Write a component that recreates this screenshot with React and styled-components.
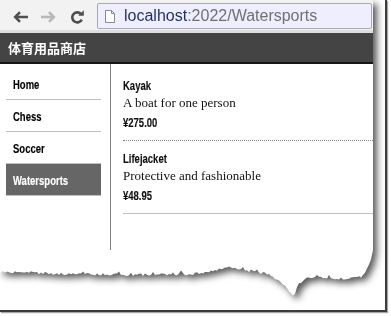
import React from 'react';
import styled, { createGlobalStyle } from 'styled-components';

const GlobalStyle = createGlobalStyle`
  html, body { margin: 0; padding: 0; background: #fff; }
  body { width: 391px; height: 316px; overflow: hidden; }
  * { box-sizing: border-box; }
`;

const KEYS = [
  [0, 272], [20, 272], [60, 274], [130, 275], [190, 274], [215, 271], [222, 268],
  [232, 267], [245, 271], [268, 274], [278, 280], [286, 286], [291, 293], [294, 297],
  [297, 286], [302, 282], [308, 277], [330, 278], [350, 279], [362, 276], [368, 268],
  [371, 260], [373, 252],
];

function baseY(x) {
  for (let i = 0; i < KEYS.length - 1; i++) {
    const [x0, y0] = KEYS[i];
    const [x1, y1] = KEYS[i + 1];
    if (x >= x0 && x <= x1) return y0 + ((y1 - y0) * (x - x0)) / (x1 - x0 || 1);
  }
  return KEYS[KEYS.length - 1][1];
}

function buildClip() {
  let seed = 11;
  const rnd = () => {
    seed = (seed * 9301 + 49297) % 233280;
    return seed / 233280;
  };
  const pts = [];
  for (let x = 373; x > 0; x -= 2) {
    let j = (rnd() - 0.5) * 2.6;
    if (rnd() > 0.88) j -= 2.5;
    pts.push(`${x}px ${(baseY(x) + j).toFixed(1)}px`);
  }
  pts.push(`0px ${baseY(0)}px`);
  return `0 0, 373px 0, ${pts.join(', ')}`;
}

const CLIP = buildClip();

const Frame = styled.div`
  width: 387px;
  height: 312px;
  border-right: 2px solid #3c3c3c;
  border-bottom: 2px solid #3c3c3c;
  box-shadow: 1px 1px 1px rgba(0, 0, 0, 0.35);
  background: #fff;
  overflow: hidden;
`;

const ShadowWrap = styled.div`
  width: 373px;
  filter: drop-shadow(4px 4px 3.5px rgba(0, 0, 0, 0.65));
`;

const Shot = styled.div`
  width: 373px;
  height: 302px;
  background: #fff;
  clip-path: polygon(${CLIP});
  display: flex;
  flex-direction: column;
`;

const Toolbar = styled.div`
  display: flex;
  align-items: center;
  gap: 13px;
  height: 33px;
  padding: 3px 1px 0 12px;
  background: #f2f2f2;
  border-bottom: 3px solid #dedede;
`;

const IconSlot = styled.span`
  display: flex;
  align-items: center;
  justify-content: center;
  width: ${(p) => p.$w}px;
  height: 27px;
`;

const Address = styled.div`
  flex: 1;
  height: 26px;
  align-self: flex-start;
  display: flex;
  align-items: center;
  gap: 9px;
  padding-left: 7px;
  background: #eeeeff;
  border: 1px solid #a9a9b2;
  border-radius: 2px;
  font-family: "Liberation Sans", Arial, sans-serif;
  font-size: 16px;
  white-space: nowrap;
  overflow: hidden;
`;

const Host = styled.span`
  color: #1f2f5c;
`;

const Path = styled.span`
  color: #707070;
`;

const Header = styled.div`
  height: 31px;
  background: #444;
  border-bottom: 2px solid #151515;
  padding: 1px 0 0 8px;
  color: #fff;
  font-family: "Noto Sans CJK SC", "Noto Sans", sans-serif;
  font-weight: 700;
  font-size: 13px;
  line-height: 28px;
`;

const Main = styled.div`
  display: flex;
`;

const Sidebar = styled.nav`
  width: 110px;
  padding: 4px 9px 0 6px;
  display: flex;
  flex-direction: column;
`;

/* Arial Narrow look: Arial bold compressed horizontally */
const Narrow = styled.span`
  display: inline-block;
  font-family: "Liberation Sans", Arial, sans-serif;
  font-weight: 700;
  font-size: 12.5px;
  white-space: nowrap;
  transform: scaleX(0.76);
  transform-origin: left center;
  -webkit-text-stroke: 0.15px currentColor;
`;

const NavLink = styled.a`
  display: block;
  height: 32px;
  line-height: 31px;
  padding: 0 7px;
  border-bottom: 1px solid #c0c0c0;
  text-decoration: none;
  color: ${(p) => (p.$active ? '#fff' : '#000')};
  background: ${(p) => (p.$active ? '#666' : 'transparent')};
`;

const Content = styled.div`
  flex: 1;
  height: 186px;
  border-left: 1px solid #808080;
  padding: 12px 0 0 12px;
`;

const Item = styled.div`
  border-top: ${(p) => (p.$first ? 'none' : '1px dotted #808080')};
  padding-top: ${(p) => (p.$first ? 0 : 8)}px;
  margin-bottom: 7px;
  color: #111;
`;

const Line = styled.div`
  line-height: ${(p) => p.$lh}px;
  height: ${(p) => p.$lh}px;
`;

const Desc = styled(Line)`
  font-family: "Liberation Serif", "Times New Roman", serif;
  font-size: 13px;
`;

const Pager = styled.div`
  margin-top: 2px;
  border-top: 1px solid #c0c0c0;
`;

const BackIcon = ({ color }) => (
  <svg width="16" height="12" viewBox="0 0 16 12">
    <path d="M16 6H3.2M8 1.2L3.2 6L8 10.8" stroke={color} strokeWidth="2.6" fill="none" />
  </svg>
);

const ForwardIcon = ({ color }) => (
  <svg width="16" height="12" viewBox="0 0 16 12">
    <path d="M0 6H12.8M8 1.2L12.8 6L8 10.8" stroke={color} strokeWidth="2.6" fill="none" />
  </svg>
);

const ReloadIcon = () => (
  <svg width="14" height="14" viewBox="0 0 14 14">
    <path d="M11.3 4.4A5 5 0 1 0 11.8 9.6" stroke="#4e4e4e" strokeWidth="2.6" fill="none" />
    <polygon points="8.2,5.8 13.8,5.8 13.8,0.2" fill="#4e4e4e" />
  </svg>
);

const PageIcon = () => (
  <svg width="10" height="13" viewBox="0 0 10 13">
    <path d="M0.5 0.5H6.5L9.5 3.5V12.5H0.5Z" stroke="#8a8a8a" fill="#fff" />
    <path d="M6.5 0.5V3.5H9.5" stroke="#8a8a8a" fill="none" />
  </svg>
);

const categories = ['Home', 'Chess', 'Soccer', 'Watersports'];
const products = [
  { name: 'Kayak', desc: 'A boat for one person', price: '¥275.00' },
  { name: 'Lifejacket', desc: 'Protective and fashionable', price: '¥48.95' },
];

export default function App() {
  return (
    <>
      <GlobalStyle />
      <Frame>
        <ShadowWrap>
          <Shot>
            <Toolbar>
              <IconSlot $w={16}><BackIcon color="#505050" /></IconSlot>
              <IconSlot $w={16}><ForwardIcon color="#b8b8b8" /></IconSlot>
              <IconSlot $w={14}><ReloadIcon /></IconSlot>
              <Address>
                <PageIcon />
                <span>
                  <Host>localhost</Host>
                  <Path>:2022/Watersports</Path>
                </span>
              </Address>
            </Toolbar>
            <Header>体育用品商店</Header>
            <Main>
              <Sidebar>
                {categories.map((c) => (
                  <NavLink key={c} $active={c === 'Watersports'}>
                    <Narrow>{c}</Narrow>
                  </NavLink>
                ))}
              </Sidebar>
              <Content>
                {products.map((p, i) => (
                  <Item key={p.name} $first={i === 0}>
                    <Line $lh={18}><Narrow>{p.name}</Narrow></Line>
                    <Desc $lh={17}>{p.desc}</Desc>
                    <Line $lh={22}><Narrow>{p.price}</Narrow></Line>
                  </Item>
                ))}
                <Pager />
              </Content>
            </Main>
          </Shot>
        </ShadowWrap>
      </Frame>
    </>
  );
}
